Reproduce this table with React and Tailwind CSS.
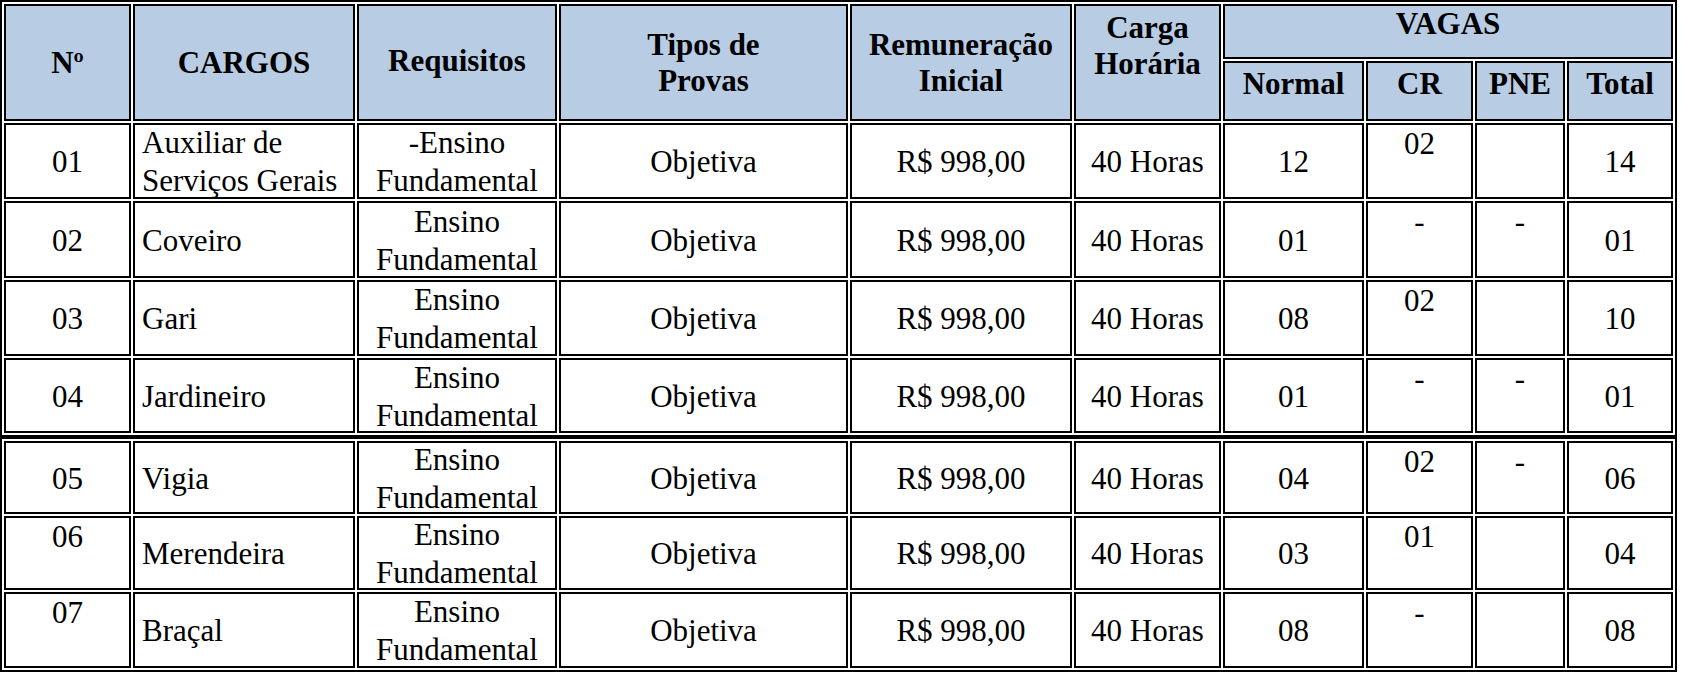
import React from "react";

const rows = [
  { n: "01", cargo: ["Auxiliar de", "Serviços Gerais"], req: "-Ensino", normal: "12", cr: "02", pne: "", total: "14" },
  { n: "02", cargo: ["Coveiro"], req: "Ensino", normal: "01", cr: "-", pne: "-", total: "01" },
  { n: "03", cargo: ["Gari"], req: "Ensino", normal: "08", cr: "02", pne: "", total: "10" },
  { n: "04", cargo: ["Jardineiro"], req: "Ensino", normal: "01", cr: "-", pne: "-", total: "01" },
  { n: "05", cargo: ["Vigia"], req: "Ensino", normal: "04", cr: "02", pne: "-", total: "06" },
  { n: "06", cargo: ["Merendeira"], req: "Ensino", normal: "03", cr: "01", pne: "", total: "04", nTop: true },
  { n: "07", cargo: ["Braçal"], req: "Ensino", normal: "08", cr: "-", pne: "", total: "08", nTop: true },
];

const tableCls =
  "table-fixed w-[1677px] border-separate border-spacing-[2px] border-2 border-black text-[31px] leading-[36px] text-black";
const td = "border-2 border-black p-0";
const th = "border-2 border-black bg-[#b8cce4] font-bold p-0";

function Cols() {
  return (
    <colgroup>
      <col className="w-[127px]" />
      <col className="w-[222px]" />
      <col className="w-[200px]" />
      <col className="w-[289px]" />
      <col className="w-[222px]" />
      <col className="w-[147px]" />
      <col className="w-[141px]" />
      <col className="w-[107px]" />
      <col className="w-[90px]" />
      <col className="w-[106px]" />
    </colgroup>
  );
}

function TwoLine({ lines, align }) {
  return (
    <div className={`h-[60px] flex flex-col justify-center leading-[38px] ${align}`}>
      {lines.map((l, i) => (
        <div key={i} className="whitespace-nowrap">{l}</div>
      ))}
    </div>
  );
}

function Row({ r, h }) {
  return (
    <tr className={h}>
      <td className={`${td} text-center ${r.nTop ? "align-top pt-[1px]" : "align-middle pt-[2px]"}`}>{r.n}</td>
      <td className={`${td} text-left align-middle pl-[7px] pt-[2px]`}>
        {r.cargo.length > 1 ? <TwoLine lines={r.cargo} align="items-start" /> : r.cargo[0]}
      </td>
      <td className={`${td} text-center align-middle pt-[2px]`}>
        <TwoLine lines={[r.req, "Fundamental"]} align="items-center" />
      </td>
      <td className={`${td} text-center align-middle pt-[2px]`}>Objetiva</td>
      <td className={`${td} text-center align-middle pt-[2px]`}>R$ 998,00</td>
      <td className={`${td} text-center align-middle pt-[2px]`}>40 Horas</td>
      <td className={`${td} text-center align-middle pt-[2px]`}>{r.normal}</td>
      <td className={`${td} text-center align-top pt-[1px]`}>{r.cr}</td>
      <td className={`${td} text-center align-top pt-[1px]`}>{r.pne}</td>
      <td className={`${td} text-center align-middle pt-[2px]`}>{r.total}</td>
    </tr>
  );
}

export default function App() {
  return (
    <div className="min-h-screen bg-white font-['Liberation_Serif','Times_New_Roman',serif]">
      <table className={tableCls}>
        <Cols />
        <thead>
          <tr className="h-[55px]">
            <th rowSpan={2} className={`${th} align-middle`}>Nº</th>
            <th rowSpan={2} className={`${th} align-middle`}>CARGOS</th>
            <th rowSpan={2} className={`${th} align-middle pb-[4px]`}>Requisitos</th>
            <th rowSpan={2} className={`${th} align-middle`}>
              Tipos de
              <br />
              Provas
            </th>
            <th rowSpan={2} className={`${th} align-middle`}>
              Remuneração
              <br />
              Inicial
            </th>
            <th rowSpan={2} className={`${th} align-top pt-[4px]`}>
              Carga
              <br />
              Horária
            </th>
            <th colSpan={4} className={`${th} align-top pt-0`}>VAGAS</th>
          </tr>
          <tr className="h-[60px]">
            <th className={`${th} align-top pt-[3px]`}>Normal</th>
            <th className={`${th} align-top pt-[3px]`}>CR</th>
            <th className={`${th} align-top pt-[3px]`}>PNE</th>
            <th className={`${th} align-top pt-[3px]`}>Total</th>
          </tr>
        </thead>
        <tbody>
          <Row r={rows[0]} h="h-[76px]" />
          <Row r={rows[1]} h="h-[77px]" />
          <Row r={rows[2]} h="h-[76px]" />
          <Row r={rows[3]} h="h-[75px]" />
        </tbody>
      </table>
      <table className={tableCls}>
        <Cols />
        <tbody>
          <Row r={rows[4]} h="h-[73px]" />
          <Row r={rows[5]} h="h-[74px]" />
          <Row r={rows[6]} h="h-[76px]" />
        </tbody>
      </table>
    </div>
  );
}
